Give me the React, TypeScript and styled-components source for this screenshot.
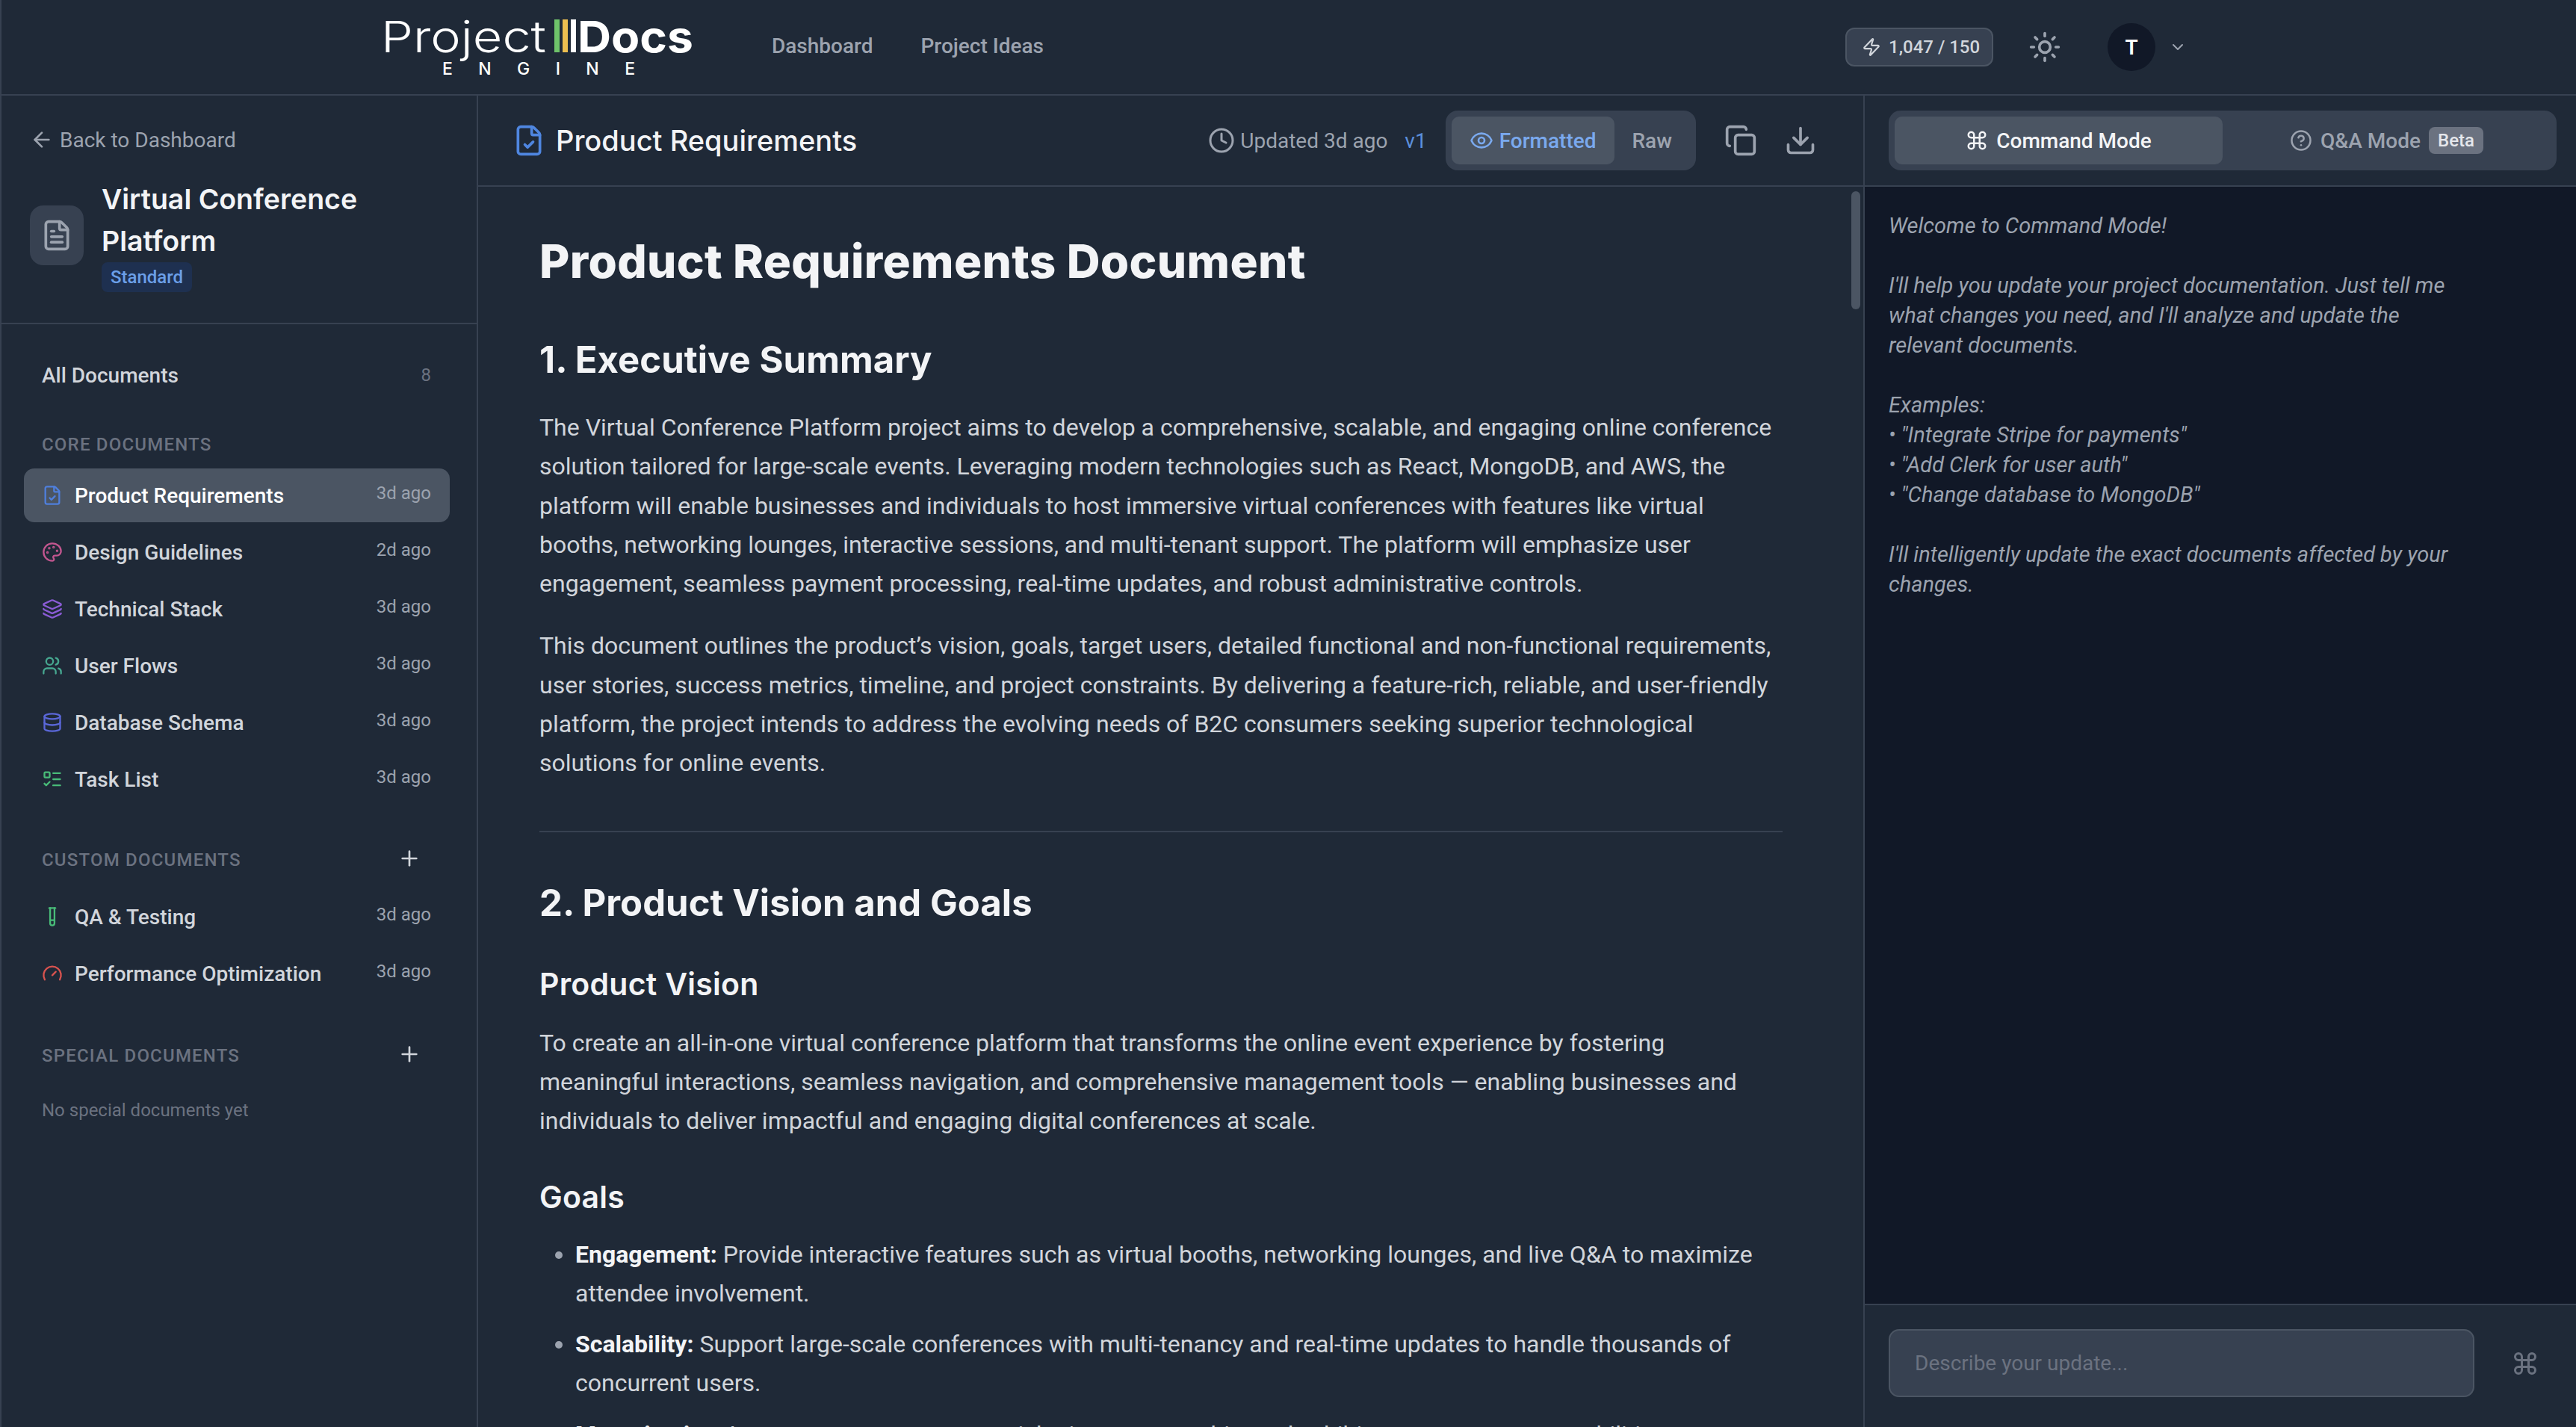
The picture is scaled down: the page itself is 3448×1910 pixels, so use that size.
import React from "react";
import styled, { createGlobalStyle } from "styled-components";
import {
  ArrowLeft, FileText, FileCheck, Palette, Layers, Users, Database, ListTodo, TestTube, Gauge,
  Plus, Clock, Eye, Copy, Download, Sun, ChevronDown, Zap, Command, CircleHelp,
} from "lucide-react";

const BODY = `Roboto, "Liberation Sans", sans-serif`;
const HEAD = `Inter, "Liberation Sans", sans-serif`;

const Global = createGlobalStyle`
  html, body { margin: 0; padding: 0; background: #1f2937; height: 100%; overflow: hidden; }
  #root { height: 100%; }
  * { box-sizing: border-box; }
  body { font-family: ${BODY}; color: #d1d5db; }
`;

const Page = styled.div`
  height: 1910px;
  display: flex;
  flex-direction: column;
  background: #1f2937;
  border-left: 2px solid #374151;
  overflow: hidden;
`;
const TopBar = styled.header`
  height: 128px;
  flex: none;
  display: flex;
  align-items: center;
  border-bottom: 2px solid #374151;
  padding-left: 503px;
`;
const LogoSvg = styled.svg`
  width: 430px;
  height: 84px;
  display: block;
  flex: none;
`;
const Nav = styled.nav`
  display: flex;
  gap: 64px;
  margin-left: 98px;
  padding-bottom: 3px;
`;
const NavLink = styled.a`
  font-size: 28px;
  color: #9ca3af;
  font-weight: 500;
`;
const TopRight = styled.div`
  margin-left: auto;
  display: flex;
  align-items: center;
  padding-right: 521px;
`;
const Credits = styled.div`
  width: 198px;
  height: 52px;
  display: flex;
  align-items: center;
  gap: 10px;
  padding-left: 20px;
  background: #374151;
  border: 2px solid #4b5563;
  border-radius: 12px;
  font-size: 24px;
  color: #d1d5db;
  font-weight: 500;
`;
const SunWrap = styled.span`
  display: flex;
  color: #9ca3af;
  margin-left: 47px;
`;
const Avatar = styled.div`
  width: 64px;
  height: 64px;
  margin-left: 62px;
  border-radius: 50%;
  background: #111827;
  color: #fff;
  font-size: 28px;
  font-weight: 600;
  display: flex;
  align-items: center;
  justify-content: center;
`;
const ChevronWrap = styled.span`
  display: flex;
  color: #9ca3af;
  margin-left: 18px;
`;
const Body = styled.div`
  flex: 1;
  min-height: 0;
  display: flex;
`;
const Sidebar = styled.aside`
  width: 638px;
  flex: none;
  border-right: 2px solid #374151;
`;
const SideHead = styled.div`
  padding: 40px 40px 41px 38px;
  border-bottom: 2px solid #374151;
`;
const BackLink = styled.a`
  height: 38px;
  display: flex;
  align-items: center;
  gap: 8px;
  font-size: 28px;
  color: #9ca3af;
`;
const ProjectBlock = styled.div`
  margin-top: 33px;
  display: flex;
  align-items: center;
  gap: 24px;
`;
const ProjectTile = styled.div`
  width: 72px;
  height: 80px;
  flex: none;
  border-radius: 18px;
  background: #374151;
  color: #9ca3af;
  display: flex;
  align-items: center;
  justify-content: center;
`;
const ProjectTitle = styled.h2`
  margin: 0;
  font-family: ${HEAD};
  font-size: 37.5px;
  font-weight: 600;
  line-height: 56px;
  color: #f3f4f6;
`;
const Badge = styled.span`
  display: inline-block;
  height: 40px;
  line-height: 40px;
  padding: 0 12px;
  border-radius: 8px;
  background: #1e3050;
  color: #6b9fe8;
  font-size: 24px;
  font-weight: 500;
`;
const DocNav = styled.nav`
  padding: 46px 36px 0 30px;
`;
const AllRow = styled.div`
  height: 44px;
  display: flex;
  align-items: center;
  justify-content: space-between;
  padding: 0 25px 0 24px;
  font-size: 28px;
  font-weight: 500;
  color: #d1d5db;
`;
const Count = styled.span`
  font-size: 24px;
  font-weight: 400;
  color: #6b7280;
`;
const SectionTitle = styled.div<{ $top: number; $bottom: number }>`
  margin: ${(p) => p.$top}px 0 ${(p) => p.$bottom}px;
  height: 32px;
  display: flex;
  align-items: center;
  justify-content: space-between;
  padding: 0 38px 0 24px;
  font-size: 24px;
  font-weight: 500;
  letter-spacing: 1.2px;
  color: #6b7280;
  svg { color: #d1d5db; position: relative; top: -2px; }
`;
const DocList = styled.div`
  display: flex;
  flex-direction: column;
  gap: 4px;
`;
const DocRow = styled.a<{ $active?: boolean }>`
  height: 72px;
  display: flex;
  align-items: center;
  gap: 16px;
  padding: 0 25px 0 24px;
  border-radius: 14px;
  background: ${(p) => (p.$active ? "#4b5563" : "transparent")};
  color: ${(p) => (p.$active ? "#ffffff" : "#d1d5db")};
  font-size: 28px;
  font-weight: 500;
`;
const DocIcon = styled.span<{ $color: string }>`
  width: 28px;
  flex: none;
  display: flex;
  justify-content: center;
  color: ${(p) => p.$color};
`;
const DocName = styled.span`
  flex: 1;
  white-space: nowrap;
`;
const DocTime = styled.span`
  font-size: 24px;
  font-weight: 400;
  color: #9ca3af;
  position: relative;
  top: -3px;
`;
const EmptyNote = styled.div`
  height: 32px;
  line-height: 32px;
  margin-top: 41px;
  padding-left: 24px;
  font-size: 24px;
  color: #6b7280;
`;
const Main = styled.main`
  width: 1856px;
  flex: none;
  display: flex;
  flex-direction: column;
  border-right: 2px solid #374151;
  position: relative;
  min-height: 0;
`;
const PaneHead = styled.div`
  height: 122px;
  flex: none;
  display: flex;
  align-items: center;
  border-bottom: 2px solid #374151;
`;
const MainHead = styled(PaneHead)`
  padding: 0 62px 0 46px;
`;
const TitleIcon = styled.span`
  display: flex;
  color: #4f86e0;
`;
const PaneTitle = styled.h1`
  margin: 0 0 0 14px;
  font-family: ${HEAD};
  font-size: 38px;
  font-weight: 500;
  color: #f3f4f6;
`;
const Meta = styled.div`
  margin-left: auto;
  display: flex;
  align-items: center;
  gap: 7px;
  font-size: 28px;
  color: #9ca3af;
`;
const Version = styled.span`
  color: #5b8fdc;
  margin-left: 16px;
`;
const Segmented = styled.div`
  height: 80px;
  display: flex;
  align-items: center;
  padding: 0 8px;
  margin-left: 25px;
  border-radius: 16px;
  background: #374151;
`;
const SegButton = styled.div<{ $active?: boolean }>`
  height: 64px;
  display: flex;
  align-items: center;
  gap: 8px;
  padding: 0 24px;
  border-radius: 10px;
  font-size: 28px;
  font-weight: 500;
  background: ${(p) => (p.$active ? "#4b5563" : "transparent")};
  color: ${(p) => (p.$active ? "#7aa9ee" : "#9ca3af")};
`;
const ToolIcon = styled.span<{ $gap: number }>`
  display: flex;
  color: #9ca3af;
  margin-left: ${(p) => p.$gap}px;
`;
const DocScroll = styled.div`
  flex: 1;
  min-height: 0;
  overflow: hidden;
  padding: 63px 108px 0 82px;
`;
const ScrollThumb = styled.div`
  position: absolute;
  top: 128px;
  right: 4px;
  width: 12px;
  height: 158px;
  border-radius: 6px;
  background: #4b5563;
`;
const H1 = styled.h1`
  margin: 0;
  font-family: ${HEAD};
  font-size: 62px;
  line-height: 74px;
  font-weight: 800;
  letter-spacing: 0.35px;
  color: #f3f4f6;
`;
const H2 = styled.h2<{ $top: number }>`
  margin: ${(p) => p.$top}px 0 0;
  font-family: ${HEAD};
  font-size: 49px;
  line-height: 58px;
  font-weight: 700;
  letter-spacing: 0.05px;
  color: #f3f4f6;
`;
const H3 = styled.h3<{ $top: number }>`
  margin: ${(p) => p.$top}px 0 0;
  font-family: ${HEAD};
  font-size: 41px;
  line-height: 48px;
  font-weight: 600;
  letter-spacing: 0.25px;
  color: #f3f4f6;
`;
const Para = styled.p<{ $top: number }>`
  margin: ${(p) => p.$top}px 0 0;
  font-size: 32px;
  line-height: 52.3px;
  color: #d1d5db;
`;
const Rule = styled.hr`
  margin: 64px 0 0;
  height: 2px;
  border: 0;
  background: #374151;
`;
const BulletList = styled.ul`
  margin: 27px 0 0;
  padding: 0 0 0 48px;
  font-size: 32px;
  line-height: 52.3px;
  color: #d1d5db;
`;
const Bullet = styled.li`
  margin-bottom: 16px;
  &::marker { color: #9ca3af; }
  strong { color: #f3f4f6; font-weight: 700; }
`;
const Chat = styled.section`
  flex: 1;
  min-width: 0;
  display: flex;
  flex-direction: column;
`;
const ChatHead = styled(PaneHead)`
  padding: 0 26px 0 32px;
`;
const ModeTabs = styled.div`
  width: 100%;
  height: 80px;
  display: flex;
  align-items: center;
  padding: 0 8px;
  border-radius: 16px;
  background: #374151;
`;
const ModeTab = styled.div<{ $active?: boolean }>`
  flex: 1;
  height: 64px;
  display: flex;
  align-items: center;
  justify-content: center;
  gap: 11px;
  border-radius: 10px;
  font-size: 28px;
  font-weight: 500;
  background: ${(p) => (p.$active ? "#4b5563" : "transparent")};
  color: ${(p) => (p.$active ? "#f3f4f6" : "#9ca3af")};
`;
const BetaTag = styled.span`
  height: 36px;
  padding: 0 12px;
  display: flex;
  align-items: center;
  border-radius: 8px;
  background: #6b7280;
  color: #e5e7eb;
  font-size: 24px;
`;
const Messages = styled.div`
  flex: 1;
  min-height: 0;
  background: #111827;
  padding: 32px 32px;
`;
const Welcome = styled.p`
  margin: 0;
  width: 790px;
  white-space: pre-wrap;
  font-size: 29px;
  line-height: 40px;
  font-style: italic;
  color: #9ca3af;
`;
const Composer = styled.div`
  height: 165px;
  flex: none;
  display: flex;
  align-items: flex-start;
  padding: 32px 0 0 32px;
  border-top: 2px solid #374151;
`;
const InputBox = styled.input`
  width: 784px;
  height: 91px;
  padding: 0 33px;
  border: 2px solid #4b5563;
  border-radius: 14px;
  background: #374151;
  font: 400 28px ${BODY};
  color: #e5e7eb;
  &::placeholder { color: #6b7280; opacity: 1; }
`;
const SendIcon = styled.span`
  display: flex;
  color: #6b7280;
  margin: 28px 0 0 50px;
`;

const core = [
  { name: "Product Requirements", time: "3d ago", color: "#4f7fdc", Icon: FileCheck, active: true },
  { name: "Design Guidelines", time: "2d ago", color: "#c2568f", Icon: Palette },
  { name: "Technical Stack", time: "3d ago", color: "#8b5cd6", Icon: Layers },
  { name: "User Flows", time: "3d ago", color: "#46a68f", Icon: Users },
  { name: "Database Schema", time: "3d ago", color: "#5a67d8", Icon: Database },
  { name: "Task List", time: "3d ago", color: "#48bb78", Icon: ListTodo },
];
const custom = [
  { name: "QA & Testing", time: "3d ago", color: "#48bb78", Icon: TestTube },
  { name: "Performance Optimization", time: "3d ago", color: "#d9534f", Icon: Gauge },
];

type Doc = { name: string; time: string; color: string; Icon: typeof Plus; active?: boolean };
const DocLink = ({ doc }: { doc: Doc }) => (
  <DocRow $active={doc.active}>
    <DocIcon $color={doc.color}><doc.Icon size={30} strokeWidth={2} /></DocIcon>
    <DocName>{doc.name}</DocName>
    <DocTime>{doc.time}</DocTime>
  </DocRow>
);

const welcome = `Welcome to Command Mode!

I'll help you update your project documentation. Just tell me what changes you need, and I'll analyze and update the relevant documents.

Examples:
• "Integrate Stripe for payments"
• "Add Clerk for user auth"
• "Change database to MongoDB"

I'll intelligently update the exact documents affected by your changes.`;

const Logo = () => (
  <LogoSvg viewBox="0 0 430 84" fill="#fff">
    <text x="5" y="49" fontFamily="Inter, sans-serif" fontWeight="300" fontSize="58" textLength="221" lengthAdjust="spacingAndGlyphs">Project</text>
    <rect x="237" y="5" width="7" height="44" fill="#6fc36a" />
    <rect x="248" y="5" width="7" height="44" fill="#ecbe50" />
    <rect x="259" y="5" width="7" height="44" fill="#fff" />
    <text x="268" y="49" fontFamily="Inter, sans-serif" fontWeight="700" fontSize="58" textLength="155" lengthAdjust="spacingAndGlyphs">Docs</text>
    <text x="87" y="79" fontFamily="Inter, sans-serif" fontWeight="500" fontSize="23" textLength="258">ENGINE</text>
  </LogoSvg>
);

export default function App() {
  return (
    <>
      <Global />
      <Page>
        <TopBar>
          <Logo />
          <Nav>
            <NavLink>Dashboard</NavLink>
            <NavLink>Project Ideas</NavLink>
          </Nav>
          <TopRight>
            <Credits><Zap size={26} strokeWidth={2} />1,047 / 150</Credits>
            <SunWrap><Sun size={44} strokeWidth={2} /></SunWrap>
            <Avatar>T</Avatar>
            <ChevronWrap><ChevronDown size={24} strokeWidth={2} /></ChevronWrap>
          </TopRight>
        </TopBar>
        <Body>
          <Sidebar>
            <SideHead>
              <BackLink><ArrowLeft size={32} strokeWidth={2} />Back to Dashboard</BackLink>
              <ProjectBlock>
                <ProjectTile><FileText size={44} strokeWidth={2} /></ProjectTile>
                <div>
                  <ProjectTitle>Virtual Conference Platform</ProjectTitle>
                  <Badge>Standard</Badge>
                </div>
              </ProjectBlock>
            </SideHead>
            <DocNav>
              <AllRow>All Documents<Count>8</Count></AllRow>
              <SectionTitle $top={55} $bottom={16}>CORE DOCUMENTS</SectionTitle>
              <DocList>{core.map((d) => <DocLink key={d.name} doc={d} />)}</DocList>
              <SectionTitle $top={56} $bottom={24}>CUSTOM DOCUMENTS<Plus size={32} strokeWidth={2} /></SectionTitle>
              <DocList>{custom.map((d) => <DocLink key={d.name} doc={d} />)}</DocList>
              <SectionTitle $top={58} $bottom={0}>SPECIAL DOCUMENTS<Plus size={32} strokeWidth={2} /></SectionTitle>
              <EmptyNote>No special documents yet</EmptyNote>
            </DocNav>
          </Sidebar>
          <Main>
            <MainHead>
              <TitleIcon><FileCheck size={44} strokeWidth={2} /></TitleIcon>
              <PaneTitle>Product Requirements</PaneTitle>
              <Meta>
                <Clock size={36} strokeWidth={2} />
                Updated 3d ago
                <Version>v1</Version>
              </Meta>
              <Segmented>
                <SegButton $active><Eye size={32} strokeWidth={2} />Formatted</SegButton>
                <SegButton>Raw</SegButton>
              </Segmented>
              <ToolIcon $gap={38}><Copy size={44} strokeWidth={2} /></ToolIcon>
              <ToolIcon $gap={36}><Download size={44} strokeWidth={2} /></ToolIcon>
            </MainHead>
            <DocScroll>
              <H1>Product Requirements Document</H1>
              <H2 $top={66}>1. Executive Summary</H2>
              <Para $top={35}>The Virtual Conference Platform project aims to develop a comprehensive, scalable, and engaging online conference solution tailored for large-scale events. Leveraging modern technologies such as React, MongoDB, and AWS, the platform will enable businesses and individuals to host immersive virtual conferences with features like virtual booths, networking lounges, interactive sessions, and multi-tenant support. The platform will emphasize user engagement, seamless payment processing, real-time updates, and robust administrative controls.</Para>
              <Para $top={31}>This document outlines the product’s vision, goals, target users, detailed functional and non-functional requirements, user stories, success metrics, timeline, and project constraints. By delivering a feature-rich, reliable, and user-friendly platform, the project intends to address the evolving needs of B2C consumers seeking superior technological solutions for online events.</Para>
              <Rule />
              <H2 $top={66}>2. Product Vision and Goals</H2>
              <H3 $top={55}>Product Vision</H3>
              <Para $top={29}>To create an all-in-one virtual conference platform that transforms the online event experience by fostering meaningful interactions, seamless navigation, and comprehensive management tools — enabling businesses and individuals to deliver impactful and engaging digital conferences at scale.</Para>
              <H3 $top={51}>Goals</H3>
              <BulletList>
                <Bullet><strong>Engagement:</strong> Provide interactive features such as virtual booths, networking lounges, and live Q&amp;A to maximize attendee involvement.</Bullet>
                <Bullet><strong>Scalability:</strong> Support large-scale conferences with multi-tenancy and real-time updates to handle thousands of concurrent users.</Bullet>
                <Bullet><strong>Monetization:</strong> Integrate secure payment, ticketing, sponsorship, and exhibitor management capabilities to facilitate revenue.</Bullet>
              </BulletList>
            </DocScroll>
            <ScrollThumb />
          </Main>
          <Chat>
            <ChatHead>
              <ModeTabs>
                <ModeTab $active><Command size={30} strokeWidth={2} />Command Mode</ModeTab>
                <ModeTab><CircleHelp size={30} strokeWidth={2} />Q&amp;A Mode<BetaTag>Beta</BetaTag></ModeTab>
              </ModeTabs>
            </ChatHead>
            <Messages><Welcome>{welcome}</Welcome></Messages>
            <Composer>
              <InputBox placeholder="Describe your update..." />
              <SendIcon><Command size={36} strokeWidth={2} /></SendIcon>
            </Composer>
          </Chat>
        </Body>
      </Page>
    </>
  );
}
